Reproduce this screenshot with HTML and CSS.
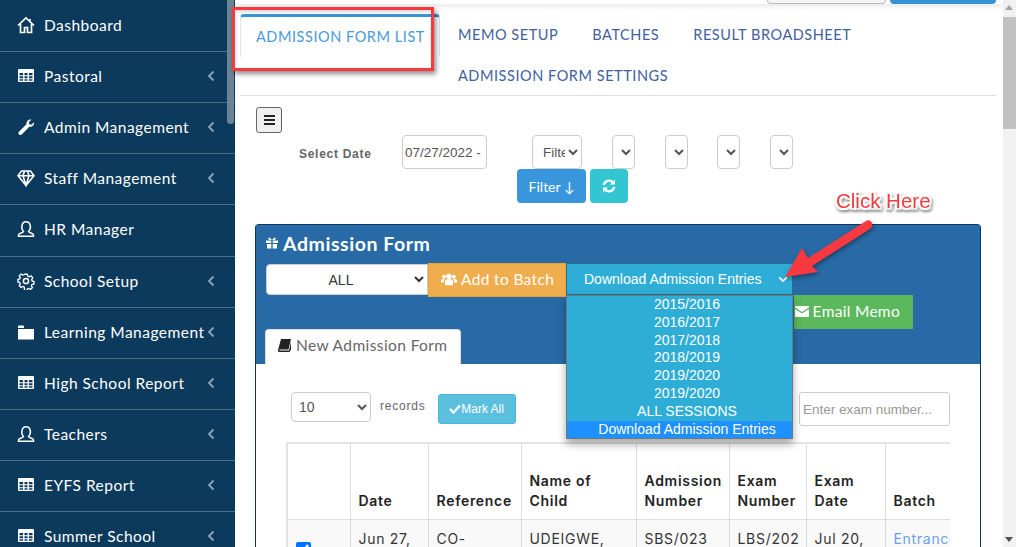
FILE: index.html
```html
<!DOCTYPE html>
<html lang="en">
<head>
<meta charset="utf-8">
<title>Admission Form</title>
<link rel="stylesheet" href="styles.css">
</head>
<body>
<svg class="defs" width="0" height="0" aria-hidden="true">
  <symbol id="i-home" viewBox="0 0 18 18"><path d="M1 9.500 9 2l8 7.500M3.500 8v8.500h4v-5h3v5h4V8M13 3v2.500" fill="none" stroke="currentColor" stroke-width="1.700"/></symbol>
  <symbol id="i-table" viewBox="0 0 18 18"><path fill-rule="evenodd" fill="currentColor" d="M2 2h14a1 1 0 0 1 1 1v11a1 1 0 0 1-1 1H2a1 1 0 0 1-1-1V3a1 1 0 0 1 1-1Zm.5 4v2.200h3.600V6Zm5 0v2.200h3V6Zm4.400 0v2.200h3.600V6Zm-9.400 3.300v2h3.600v-2Zm5 0v2h3v-2Zm4.400 0v2h3.600v-2Zm-9.400 3v1.400h3.600v-1.400Zm5 0v1.400h3v-1.400Zm4.400 0v1.400h3.600v-1.400Z"/></symbol>
  <symbol id="i-wrench" viewBox="0 0 18 18"><path fill="currentColor" d="M17 4.200c.5 2.600-1.900 5.300-4.700 4.600L5 16.200c-1 1-2 1.200-3 .4-1-1-.7-2.100.2-3l7.300-7.300C8.900 3.500 11.600 1 14.400 1.500l-2.600 2.700.5 2 2 .5Z"/></symbol>
  <symbol id="i-gem" viewBox="0 0 18 18"><path fill="none" stroke="currentColor" stroke-width="1.600" d="M4.500 2h9L17 6.700 9 16.500 1 6.700ZM1 6.700h16M6 6.700 9 16.500l3-9.800M6 6.700 7.500 2M12 6.700 10.500 2"/></symbol>
  <symbol id="i-user" viewBox="0 0 18 18"><path fill="none" stroke="currentColor" stroke-width="1.500" d="M6.500 11.500C4.800 9.800 4.500 7.800 5 5.500 5.500 3 7 1.800 9 1.800S12.800 3 13.300 5.500c.4 2.300.1 4.300-1.800 6 .5 1.500 5 1.500 5 3.400v1.300H1.500v-1.300c0-1.900 4.500-1.900 5-3.400Z"/></symbol>
  <symbol id="i-gear" viewBox="0 0 18 18"><circle cx="9" cy="9" r="2.600" fill="none" stroke="currentColor" stroke-width="1.500"/><path fill="none" stroke="currentColor" stroke-width="1.500" d="M7.500 1.500h3l.5 2.200 1.500.7 2-1.100 2 2.200-1.200 1.900.5 1.600 2 .6v2.800l-2.200.5-.6 1.500 1.100 2-2.100 2-1.900-1.200-1.600.6-.5 2H7.500L7 15.700l-1.500-.6-2 1.100-2-2.100 1.100-1.900-.6-1.600-2-.5V7.300L2 6.800l.6-1.600-1.100-2 2-2L5.500 2.400 7 1.800Z" transform="translate(.9 .9) scale(.9)"/></symbol>
  <symbol id="i-folder" viewBox="0 0 18 18"><path fill="currentColor" d="M1 6h16v10.500H1ZM1 5V3.800C1 3 1.500 2.500 2.200 2.500h3.600c.7 0 1.200.5 1.200 1.300V5Z"/></symbol>
  <symbol id="i-left" viewBox="0 0 8 12"><path fill="none" stroke="currentColor" stroke-width="1.800" d="M6.500 1.500 2 6l4.500 4.500"/></symbol>
  <symbol id="i-down" viewBox="0 0 12 8"><path fill="none" stroke="currentColor" stroke-width="2" d="M1.500 1.500 6 6l4.500-4.500"/></symbol>
</svg>

<nav class="sidebar">
  <a class="nav-item"><svg class="nav-icon"><use href="#i-home"/></svg><span>Dashboard</span></a>
  <a class="nav-item"><svg class="nav-icon"><use href="#i-table"/></svg><span>Pastoral</span><svg class="nav-chevron"><use href="#i-left"/></svg></a>
  <a class="nav-item"><svg class="nav-icon"><use href="#i-wrench"/></svg><span>Admin Management</span><svg class="nav-chevron"><use href="#i-left"/></svg></a>
  <a class="nav-item"><svg class="nav-icon"><use href="#i-gem"/></svg><span>Staff Management</span><svg class="nav-chevron"><use href="#i-left"/></svg></a>
  <a class="nav-item nav-item-tall"><svg class="nav-icon"><use href="#i-user"/></svg><span>HR Manager</span></a>
  <a class="nav-item"><svg class="nav-icon"><use href="#i-gear"/></svg><span>School Setup</span><svg class="nav-chevron"><use href="#i-left"/></svg></a>
  <a class="nav-item"><svg class="nav-icon"><use href="#i-folder"/></svg><span>Learning Management</span><svg class="nav-chevron"><use href="#i-left"/></svg></a>
  <a class="nav-item"><svg class="nav-icon"><use href="#i-table"/></svg><span>High School Report</span><svg class="nav-chevron"><use href="#i-left"/></svg></a>
  <a class="nav-item"><svg class="nav-icon"><use href="#i-user"/></svg><span>Teachers</span><svg class="nav-chevron"><use href="#i-left"/></svg></a>
  <a class="nav-item"><svg class="nav-icon"><use href="#i-table"/></svg><span>EYFS Report</span><svg class="nav-chevron"><use href="#i-left"/></svg></a>
  <a class="nav-item"><svg class="nav-icon"><use href="#i-table"/></svg><span>Summer School</span><svg class="nav-chevron"><use href="#i-left"/></svg></a>
  <div class="side-thumb"></div>
</nav>

<main class="main">
  <div class="topbar">
    <div class="top-btn top-btn-grey"></div>
    <div class="top-btn top-btn-blue"></div>
  </div>

  <ul class="tabs">
    <li class="tab tab-active">ADMISSION FORM LIST</li>
    <li class="tab">MEMO SETUP</li>
    <li class="tab">BATCHES</li>
    <li class="tab">RESULT BROADSHEET</li>
    <li class="tab tab-second">ADMISSION FORM SETTINGS</li>
  </ul>

  <button class="burger" aria-label="Menu"><span></span><span></span><span></span></button>

  <div class="filters">
    <label class="filter-label">Select Date</label>
    <input class="date-input" value="07/27/2022 - 08/27/2022">
    <select class="sel sel-filter"><option>Filter</option></select>
    <select class="sel sel-empty"></select>
    <select class="sel sel-empty"></select>
    <select class="sel sel-empty"></select>
    <select class="sel sel-empty"></select>
  </div>
  <div class="filter-actions">
    <button class="btn-filter">Filter ↓</button>
    <button class="btn-refresh" aria-label="Refresh">
      <svg width="14" height="14" viewBox="0 0 14 14"><path fill="none" stroke="#fff" stroke-width="2.400" d="M1.800 6A5.300 5.300 0 0 1 11 3.500M12.200 8A5.300 5.300 0 0 1 3 10.500"/><path fill="#fff" d="M13 .5v5H8ZM1 13.500v-5h5Z"/></svg>
    </button>
  </div>

  <section class="card">
    <header class="card-head">
      <h2 class="card-title">
        <svg width="12" height="12" viewBox="0 0 12 12"><path fill="#fff" d="M0 3.500h5.300V6H0ZM6.700 3.500H12V6H6.700ZM1 7h4.300v4.500H1ZM6.700 7H11v4.500H6.700ZM3.300 3 2 1.500 3.500.5 6 3l2.500-2.500L10 1.500 8.700 3Z"/></svg>
        Admission Form
      </h2>
      <div class="head-row">
        <select class="all-select"><option>ALL</option></select>
        <button class="btn-batch">
          <svg width="16" height="14" viewBox="0 0 18 14"><circle cx="9" cy="4" r="3" fill="#fff"/><circle cx="3.500" cy="4.500" r="2.200" fill="#fff"/><circle cx="14.500" cy="4.500" r="2.200" fill="#fff"/><path fill="#fff" d="M4.500 14V10c0-2 1.500-3 4.500-3s4.500 1 4.500 3v4ZM0 11V9c0-1.300 1-2 3.500-2l.5.500C3.500 8 3.300 9 3.300 11ZM18 11V9c0-1.300-1-2-3.500-2l-.5.500c.5.500.7 1.500.7 3.500Z"/></svg>
          Add to Batch
        </button>
        <div class="download">
          <button class="btn-download">Download Admission Entries<svg class="download-chevron"><use href="#i-down"/></svg></button>
          <ul class="download-menu">
            <li>2015/2016</li>
            <li>2016/2017</li>
            <li>2017/2018</li>
            <li>2018/2019</li>
            <li>2019/2020</li>
            <li>2019/2020</li>
            <li>ALL SESSIONS</li>
            <li class="menu-selected">Download Admission Entries</li>
          </ul>
        </div>
      </div>
      <div class="email-row">
        <button class="btn-email">
          <svg width="14" height="11" viewBox="0 0 14 11"><path fill="#fff" d="M0 0h14v1.500L7 6 0 1.500ZM0 3l7 4.500L14 3v8H0Z"/></svg>
          Email Memo
        </button>
      </div>
      <div class="new-tab">
        <svg width="13" height="13" viewBox="0 0 13 13"><path fill="#222" d="M3 0h10l-2.500 10.500H2c-.8 0-1 .8-.3 1h9.300L13 3v7.500l-1.500 2.500H1.500C.3 13-.3 11.800.2 10.500Z"/></svg>
        New Admission Form
      </div>
    </header>

    <div class="card-body">
      <div class="tools">
        <select class="records-select"><option>10</option></select>
        <span class="records-label">records</span>
        <button class="btn-mark"><svg width="12" height="10" viewBox="0 0 12 10"><path fill="none" stroke="#fff" stroke-width="2.400" d="m1 5 3.500 3.500L11 1.500"/></svg>Mark All</button>
        <input class="search" placeholder="Enter exam number...">
      </div>
      <div class="table-wrap">
        <table class="entries">
          <colgroup>
            <col class="c-check"><col class="c-date"><col class="c-ref"><col class="c-name"><col class="c-adm"><col class="c-exam"><col class="c-edate"><col class="c-batch">
          </colgroup>
          <thead>
            <tr><th></th><th>Date</th><th>Reference</th><th>Name of Child</th><th>Admission Number</th><th>Exam Number</th><th>Exam Date</th><th>Batch</th></tr>
          </thead>
          <tbody>
            <tr>
              <td class="cell-check"><input type="checkbox" checked></td>
              <td>Jun 27, 2022</td><td>CO-20220627</td><td>UDEIGWE, CHIOMA</td><td>SBS/023</td><td>LBS/202</td><td>Jul 20, 2022</td><td class="cell-link">Entrance</td>
            </tr>
          </tbody>
        </table>
      </div>
    </div>
  </section>

  <div class="callout">Click Here</div>
  <svg class="arrow" width="100" height="70" viewBox="0 0 100 70"><path fill="#f8393f" d="M5 62 22 33l6 10L86 6q4-2 6 2 1 4-2 6L32 51l6 6Z"/></svg>
  <div class="red-box"></div>
</main>

<aside class="page-scroll">
  <span class="scroll-up"></span>
  <span class="scroll-thumb"></span>
  <span class="scroll-down"></span>
</aside>
</body>
</html>
```

FILE: styles.css
```css
* { box-sizing: border-box; }
html, body { margin: 0; height: 547px; overflow: hidden; }
body { display: flex; background: #fff; font-family: "Lato", "Liberation Sans", sans-serif; color: #333; }
.defs { position: absolute; }
button, input, select { font-family: inherit; margin: 0; }

/* Sidebar */
.sidebar { position: relative; flex: 0 0 235px; height: 547px; overflow: hidden; padding-top: 1px; background: #0b3a5c; color: #fff; }
.nav-item { display: flex; align-items: center; height: 51px; padding: 0 20px 2px 17px; border-bottom: 1px solid #4b6d87; font-size: 15.500px; letter-spacing: .48px; white-space: nowrap; }
.nav-item-tall { height: 52px; padding-bottom: 3px; }
.nav-icon { flex: 0 0 18px; width: 18px; height: 18px; margin-right: 9px; }
.nav-chevron { width: 8px; height: 12px; margin-left: auto; color: #8fa5b6; }
.side-thumb { position: absolute; top: 0; right: 1px; width: 7px; height: 124px; border-radius: 0 0 4px 4px; background: #6d8497; }

/* Main */
.main { position: relative; flex: 0 0 768px; height: 547px; }
.topbar { display: flex; justify-content: flex-end; gap: 4px; height: 4px; padding-right: 7px; box-shadow: 0 2px 5px rgba(0,0,0,.12); }
.top-btn { height: 4px; border-radius: 0 0 4px 4px; }
.top-btn-grey { width: 119px; background: #f4f4f4; border: 1px solid #bbb; border-top: 0; }
.top-btn-blue { width: 106px; background: #3a92d6; }

.tabs { display: flex; flex-wrap: wrap; width: 756px; height: 92px; margin: 0 0 0 5px; padding: 10px 0 0; list-style: none; border-bottom: 1px solid #ddd; font-size: 14.500px; letter-spacing: .55px; color: #41609f; }
.tab { height: 41px; padding: 12px 17px 0; white-space: nowrap; }
.tab-active { width: 200px; height: 43px; margin-right: 1px; padding: 11px 0 0 15px; border: 1px solid #e2e2e2; border-top: 3px solid #3a92d6; border-bottom: 0; border-radius: 4px 4px 0 0; color: #4a9ad8; }
.tab-second { margin-left: 201px; padding-top: 10px; }

.burger { display: flex; flex-direction: column; justify-content: center; align-items: center; gap: 2px; width: 26px; height: 26px; margin: 11px 0 0 21px; padding: 0; background: #f0f0f0; border: 1px solid #666; border-radius: 3px; }
.burger span { display: block; width: 11px; height: 2px; background: #222; }

.filters { display: flex; align-items: center; height: 34px; margin-top: 2px; padding-left: 64px; }
.filter-label { width: 103px; margin-top: 4px; font: bold 12px "Liberation Sans", sans-serif; letter-spacing: .72px; color: #666; }
.date-input { width: 85px; height: 34px; padding: 0 2px; border: 1px solid #ccc; border-radius: 4px; font: 13.500px "Liberation Sans", sans-serif; color: #555; overflow: hidden; }
.sel { height: 34px; border: 1px solid #ccc; border-radius: 4px; background: #fff; color: #555; font: 13.500px "Liberation Sans", sans-serif; padding: 0; }
.sel-filter { width: 50px; margin: 0 30px 0 45px; padding-left: 6px; }
.sel-empty { width: 23px; margin-right: 29.700px; }

.filter-actions { display: flex; gap: 4px; margin: 0 0 0 282px; }
.btn-filter { width: 69px; height: 34px; border: 0; border-radius: 4px; background: #3a96dc; color: #fff; font-size: 14px; }
.btn-refresh { display: flex; align-items: center; justify-content: center; width: 38px; height: 34px; padding: 0; border: 0; border-radius: 4px; background: #33c6d2; }

/* Card */
.card { width: 726px; margin: 21px 0 0 20px; border: 1px solid #0b3a5c; border-bottom: 0; border-radius: 4px 4px 0 0; background: #fff; }
.card-head { position: relative; height: 139px; background: #286aa5; padding: 0 0 0 10px; }
.card-title { display: flex; align-items: center; gap: 5px; height: 38px; margin: 0; padding-bottom: 2px; color: #fff; font-size: 19.500px; font-weight: 700; letter-spacing: .55px; }
.head-row { display: flex; align-items: flex-start; }
.all-select { width: 162px; height: 31px; margin-top: 1px; border: 1px solid #ccc; border-radius: 4px 0 0 4px; background: #fff; color: #333; font: 14px "Liberation Sans", sans-serif; text-align: center; }
.btn-batch { display: flex; align-items: center; gap: 4px; width: 138px; height: 34px; padding: 0 0 3px 12px; border: 1px solid #eea236; background: #f0ad4e; color: #fff; font-size: 15.500px; letter-spacing: .35px; }
.download { position: relative; z-index: 2; }
.btn-download { display: flex; align-items: center; width: 227px; height: 32px; padding: 0 0 0 17px; border: 1px solid #2a6f90; background: #2eaed6; color: #fff; font: 14px "Liberation Sans", sans-serif; white-space: nowrap; }
.download-chevron { width: 10px; height: 7px; margin-left: 17px; color: #fff; }
.download-menu { position: absolute; top: 32px; left: 0; width: 227px; height: 144px; margin: 0; padding: 0; list-style: none; background: #2eaed6; border: 1px solid #6c7a80; box-shadow: 0 5px 8px rgba(0,0,0,.35); color: #fff; font: 14px/17.800px "Liberation Sans", sans-serif; text-align: center; }
.download-menu li { padding-left: 15px; }
.download-menu .menu-selected { background: #1e90ff; }
.email-row { position: absolute; top: 70px; left: 538px; }
.btn-email { display: flex; align-items: center; justify-content: flex-end; gap: 4px; width: 119px; height: 34px; padding: 0 13px 2px 0; border: 0; background: #5cb85c; color: #fff; font-size: 15.500px; letter-spacing: .3px; white-space: nowrap; }
.btn-email svg { flex: 0 0 14px; }
.new-tab { position: absolute; left: 9px; bottom: 0; display: flex; align-items: center; gap: 5px; width: 196px; height: 35px; padding: 0 0 4px 12px; background: #fff; border: 1px solid #ddd; border-bottom: 0; border-radius: 4px 4px 0 0; color: #666; font-size: 15.500px; letter-spacing: .4px; }

.card-body { height: 183px; overflow: hidden; padding: 28px 30px 0 30px; }
.tools { display: flex; align-items: flex-start; height: 50px; padding-left: 5px; }
.records-select { width: 80px; height: 30px; border: 1px solid #ccc; border-radius: 4px; background: #fff; color: #555; font: 14px "Liberation Sans", sans-serif; padding-left: 3px; }
.records-label { margin: 7px 0 0 9px; font: 12px "Liberation Sans", sans-serif; letter-spacing: .8px; color: #666; }
.btn-mark { display: flex; align-items: center; justify-content: center; width: 78px; height: 30px; margin: 2px 0 0 12px; padding: 0; border: 1px solid #46b8da; border-radius: 3px; background: #5bc0de; color: #fff; font: 12px "Liberation Sans", sans-serif; }
.search { width: 151px; height: 34px; margin-left: auto; padding: 0 3px; border: 1px solid #ccc; border-radius: 3px; font: 13.500px "Liberation Sans", sans-serif; }
.search::placeholder { color: #999; }

.table-wrap { width: 664px; overflow: hidden; }
.entries { width: 664px; table-layout: fixed; border-collapse: collapse; border: 2px solid #e4e4e4; font-family: "Inter", "Roboto", sans-serif; font-size: 14px; letter-spacing: .7px; color: #333; }
.c-check { width: 63px; }
.c-date { width: 78px; }
.c-ref { width: 93px; }
.c-name { width: 115px; }
.c-adm { width: 93px; }
.c-exam { width: 77px; }
.c-edate { width: 79px; }
.c-batch { width: 66px; }
.entries th { height: 76px; padding: 0 8px 8px; border: 1px solid #ddd; text-align: left; vertical-align: bottom; font-weight: 600; line-height: 20px; color: #222; }
.entries td { height: 60px; padding: 9px 8px; border: 1px solid #ddd; background: #f9f9f9; vertical-align: top; line-height: 20px; overflow: hidden; }
.entries .cell-check { padding: 22px 0 0 8px; }
.cell-check input { width: 15px; height: 15px; margin: 0; }
.entries .cell-link { color: #6d9fe6; white-space: nowrap; }

/* Annotations */
.red-box { position: absolute; left: -3px; top: 7px; width: 202px; height: 64px; border: 3px solid #f8393f; box-shadow: 2px 3px 5px rgba(0,0,0,.45), inset 0 2px 3px rgba(0,0,0,.15); }
.callout { position: absolute; z-index: 3; left: 600px; top: 189px; padding: 0 1px; font: 20.500px/24px "Liberation Sans", sans-serif; color: #f8393f; text-shadow: 2px 0 1px #fff, -2px 0 1px #fff, 0 2px 1px #fff, 0 -2px 1px #fff, 2px 2px 1px #fff, -2px -2px 1px #fff, 2px -2px 1px #fff, -2px 2px 1px #fff; filter: drop-shadow(1px 2px 1px rgba(0,0,0,.45)); }
.arrow { position: absolute; z-index: 3; left: 545px; top: 215px; filter: drop-shadow(1px 2px 2px rgba(0,0,0,.4)); }

/* Page scrollbar */
.page-scroll { position: relative; flex: 0 0 13px; height: 547px; background: #f1f1f1; }
.scroll-thumb { position: absolute; top: 17px; left: 0; width: 13px; height: 112px; background: #c1c1c1; }
.scroll-up { position: absolute; top: 5px; left: 2px; border: 4.500px solid transparent; border-top: 0; border-bottom: 5px solid #a3a3a3; }
.scroll-down { position: absolute; bottom: 5px; left: 2px; border: 4.500px solid transparent; border-bottom: 0; border-top: 5px solid #505050; }
```
